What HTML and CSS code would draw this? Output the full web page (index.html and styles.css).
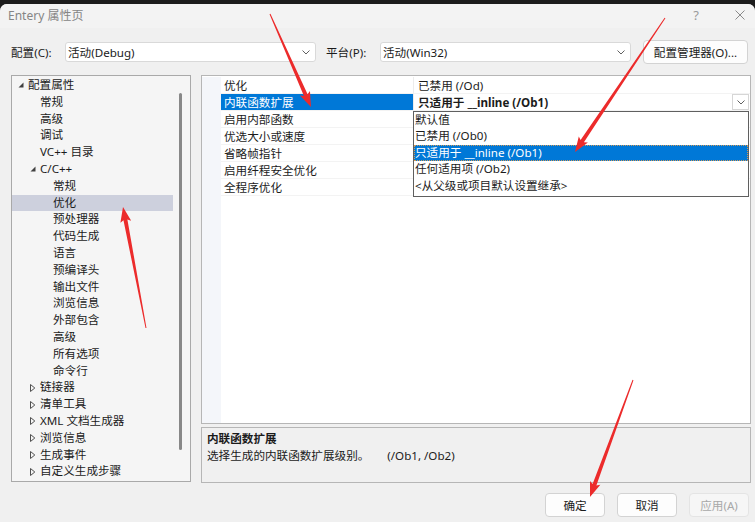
FILE: index.html
```html
<!DOCTYPE html>
<html>
  <head>
    <meta charset="utf-8">
    <title>Entery 属性页</title>
    <link rel="stylesheet" href="styles.css">
  </head>
  <body>
    <div class="window">
      <div class="titlebar">
        <span class="title">Entery 属性页</span>
        <span class="title-help">?</span>
        <svg class="title-close" width="10" height="10" viewBox="0 0 10 10"><path d="M0.5 0.5 L9.5 9.5 M9.5 0.5 L0.5 9.5" stroke="#8a8a8a" stroke-width="1"/></svg>
      </div>

      <div class="config-row">
        <span class="field-label">配置(C):</span>
        <div class="combo">
          <span>活动(Debug)</span>
          <svg class="chev" width="8" height="5" viewBox="0 0 8 5"><polyline points="0.5,0.5 4,4 7.5,0.5" fill="none" stroke="#606060"/></svg>
        </div>
        <span class="field-label second">平台(P):</span>
        <div class="combo">
          <span>活动(Win32)</span>
          <svg class="chev" width="8" height="5" viewBox="0 0 8 5"><polyline points="0.5,0.5 4,4 7.5,0.5" fill="none" stroke="#606060"/></svg>
        </div>
        <button class="btn btn-mgr">配置管理器(O)...</button>
      </div>

      <div class="main">
        <div class="tree">
          <ul class="tree-list">
            <li class="lv0"><span class="twisty"><svg width="6" height="6" viewBox="0 0 6 6"><polygon points="5.5,0.5 5.5,5.5 0.5,5.5" fill="#404040"/></svg></span>配置属性</li>
            <li class="lv1">常规</li>
            <li class="lv1">高级</li>
            <li class="lv1">调试</li>
            <li class="lv1">VC++ 目录</li>
            <li class="lv1 has-twisty"><span class="twisty"><svg width="6" height="6" viewBox="0 0 6 6"><polygon points="5.5,0.5 5.5,5.5 0.5,5.5" fill="#404040"/></svg></span>C/C++</li>
            <li class="lv2">常规</li>
            <li class="lv2 selected">优化</li>
            <li class="lv2">预处理器</li>
            <li class="lv2">代码生成</li>
            <li class="lv2">语言</li>
            <li class="lv2">预编译头</li>
            <li class="lv2">输出文件</li>
            <li class="lv2">浏览信息</li>
            <li class="lv2">外部包含</li>
            <li class="lv2">高级</li>
            <li class="lv2">所有选项</li>
            <li class="lv2">命令行</li>
            <li class="lv1 has-twisty"><span class="twisty"><svg width="6" height="8" viewBox="0 0 6 8"><polygon points="0.5,0.5 4.8,4 0.5,7.5" fill="none" stroke="#505050"/></svg></span>链接器</li>
            <li class="lv1 has-twisty"><span class="twisty"><svg width="6" height="8" viewBox="0 0 6 8"><polygon points="0.5,0.5 4.8,4 0.5,7.5" fill="none" stroke="#505050"/></svg></span>清单工具</li>
            <li class="lv1 has-twisty"><span class="twisty"><svg width="6" height="8" viewBox="0 0 6 8"><polygon points="0.5,0.5 4.8,4 0.5,7.5" fill="none" stroke="#505050"/></svg></span>XML 文档生成器</li>
            <li class="lv1 has-twisty"><span class="twisty"><svg width="6" height="8" viewBox="0 0 6 8"><polygon points="0.5,0.5 4.8,4 0.5,7.5" fill="none" stroke="#505050"/></svg></span>浏览信息</li>
            <li class="lv1 has-twisty"><span class="twisty"><svg width="6" height="8" viewBox="0 0 6 8"><polygon points="0.5,0.5 4.8,4 0.5,7.5" fill="none" stroke="#505050"/></svg></span>生成事件</li>
            <li class="lv1 has-twisty"><span class="twisty"><svg width="6" height="8" viewBox="0 0 6 8"><polygon points="0.5,0.5 4.8,4 0.5,7.5" fill="none" stroke="#505050"/></svg></span>自定义生成步骤</li>
          </ul>
          <div class="vscroll"><div class="thumb"></div></div>
        </div>

        <div class="right">
          <div class="grid">
            <div class="grid-margin"></div>
            <div class="grid-rows">
              <div class="prow">
                <div class="pname">优化</div>
                <div class="pvalue">已禁用 (/Od)</div>
              </div>
              <div class="prow">
                <div class="pname sel">内联函数扩展</div>
                <div class="pvalue edit">
                  <span>只适用于 __inline (/Ob1)</span>
                  <span class="dropbtn"><svg width="8" height="5" viewBox="0 0 8 5"><polyline points="0.5,0.5 4,4 7.5,0.5" fill="none" stroke="#606060"/></svg></span>
                </div>
              </div>
              <div class="prow">
                <div class="pname">启用内部函数</div>
                <div class="pvalue"></div>
              </div>
              <div class="prow">
                <div class="pname">优选大小或速度</div>
                <div class="pvalue"></div>
              </div>
              <div class="prow">
                <div class="pname">省略帧指针</div>
                <div class="pvalue"></div>
              </div>
              <div class="prow">
                <div class="pname">启用纤程安全优化</div>
                <div class="pvalue"></div>
              </div>
              <div class="prow">
                <div class="pname">全程序优化</div>
                <div class="pvalue"></div>
              </div>
            </div>

            <ul class="dropdown">
              <li>默认值</li>
              <li>已禁用 (/Ob0)</li>
              <li class="hot">只适用于 __inline (/Ob1)</li>
              <li>任何适用项 (/Ob2)</li>
              <li>&lt;从父级或项目默认设置继承&gt;</li>
            </ul>
          </div>

          <div class="desc">
            <div class="desc-title">内联函数扩展</div>
            <div>选择生成的内联函数扩展级别。<span class="desc-switch">(/Ob1, /Ob2)</span></div>
          </div>
        </div>
      </div>

      <div class="footer">
        <button class="btn">确定</button>
        <button class="btn">取消</button>
        <button class="btn" disabled>应用(A)</button>
      </div>
    </div>

    <!-- annotation arrows drawn on top of the screenshot -->
    <svg class="arrows" width="755" height="522" viewBox="0 0 755 522">
      <polygon points="269.54,14.2 303.92,95.91 299.92,95.49 311,107 309.98,91.05 307.58,94.29 270.46,13.8"/>
      <polygon points="664.59,17.72 580.59,140.09 578.79,136.48 575,152 587.93,142.62 583.91,142.33 665.42,18.28"/>
      <polygon points="146.49,327.91 127.39,219.4 131.2,220.7 123,207 120.4,222.76 123.47,220.14 145.51,328.09"/>
      <polygon points="632.53,379.83 592.61,484.11 590.02,481.02 590,497 600.34,484.82 596.37,485.49 633.47,380.17"/>
    </svg>
  </body>
</html>
```

FILE: styles.css
```css
* {
  box-sizing: border-box;
}

body {
  margin: 0;
  background-color: #1c1c1c;
  font-family: "Noto Sans", "Noto Sans CJK SC", sans-serif;
  font-size: 11.6px;
  color: #1b1b1b;
}

.window {
  margin-top: 4px;
  height: 518px;
  background-color: #f0f0f0;
  border-radius: 7px 7px 0 0;
  overflow: hidden;
}

/* title bar */
.titlebar {
  display: flex;
  align-items: center;
  height: 24px;
  padding: 0 10px 2px 8px;
  background-color: #f3f3f3;
  color: #858585;
}

.title {
  font-size: 12px;
}

.title-help {
  margin-left: auto;
  margin-right: 36px;
  color: #9a9a9a;
  font-size: 13px;
}

/* configuration row */
.config-row {
  display: flex;
  align-items: center;
  height: 24px;
  margin-top: 12px;
  padding-left: 11px;
}

.field-label {
  width: 54px;
  white-space: nowrap;
}

.field-label.second {
  margin-left: 10px;
}

.combo {
  display: flex;
  align-items: center;
  justify-content: space-between;
  width: 251px;
  height: 20px;
  padding: 0 5px 0 2px;
  background-color: #fff;
  border: 1px solid #d9d9d9;
  border-radius: 3px;
}

.btn {
  width: 60px;
  height: 24px;
  padding: 0;
  font: inherit;
  color: #1b1b1b;
  background-color: #fdfdfd;
  border: 1px solid #d3d3d3;
  border-radius: 4px;
}

.btn:disabled {
  color: #a8a8a8;
  background-color: #f6f6f6;
  border-color: #e4e4e4;
}

.btn-mgr {
  width: 105px;
  margin-left: 12px;
}

/* main area */
.main {
  display: flex;
  gap: 10px;
  margin-top: 11px;
  padding-left: 11px;
}

.tree {
  display: flex;
  width: 180px;
  height: 407px;
  background-color: #f5f5f5;
  border: 1px solid #a9a9a9;
}

.tree-list {
  width: 161px;
  margin: 0;
  padding: 1px 0 0;
  list-style: none;
}

.tree-list li {
  display: flex;
  align-items: center;
  height: 16.8px;
  line-height: 16.8px;
  white-space: nowrap;
}

.twisty {
  display: flex;
  align-items: center;
  width: 10px;
}

.lv0 {
  padding-left: 6px;
}

.lv1 {
  padding-left: 28px;
}

.lv1.has-twisty {
  padding-left: 18px;
}

.lv2 {
  padding-left: 41px;
}

.tree-list li.selected {
  background-color: #cdd0dd;
}

.vscroll {
  width: 17px;
  padding: 17px 0 0 6px;
}

.thumb {
  width: 3px;
  height: 357px;
  background-color: #888;
  border-radius: 2px;
}

.right {
  display: flex;
  flex-direction: column;
  gap: 3px;
  width: 550px;
}

/* property grid */
.grid {
  position: relative;
  display: flex;
  height: 349px;
  padding-top: 1px;
  background-color: #fff;
  border: 1px solid #b6b6b6;
}

.grid-margin {
  width: 19px;
  background-color: #f4f6fa;
}

.grid-rows {
  flex: 1;
}

.prow {
  display: flex;
  height: 17px;
  line-height: 17px;
}

.pname {
  width: 192px;
  padding-left: 3px;
  border-bottom: 1px solid #f3f3f3;
  white-space: nowrap;
}

.pname.sel {
  background-color: #0078d7;
  color: #fff;
}

.pvalue {
  flex: 1;
  padding-left: 4px;
  border-left: 1px solid #ececec;
  border-bottom: 1px solid #f3f3f3;
  white-space: nowrap;
}

.pvalue.edit {
  display: flex;
  align-items: center;
  justify-content: space-between;
  padding-right: 1px;
  font-weight: bold;
}

.dropbtn {
  display: flex;
  align-items: center;
  justify-content: center;
  width: 17px;
  height: 16px;
  background-color: #fff;
  border: 1px solid #d6d6d6;
}

.dropdown {
  position: absolute;
  top: 35px;
  left: 211px;
  width: 336px;
  height: 86px;
  margin: 0;
  padding: 0;
  list-style: none;
  background-color: #fff;
  border: 1px solid #5f5f5f;
}

.dropdown li {
  height: 16.4px;
  line-height: 16.4px;
  padding-left: 1px;
  white-space: nowrap;
}

.dropdown li.hot {
  background-color: #0078d7;
  color: #fff;
  outline: 1px dotted #d39a58;
  outline-offset: -1px;
}

/* description */
.desc {
  height: 56px;
  padding: 2px 5px;
  line-height: 17px;
  background-color: #f0f0f0;
  border: 1px solid #b6b6b6;
}

.desc-title {
  font-weight: bold;
}

.desc-switch {
  margin-left: 18px;
}

/* buttons */
.footer {
  display: flex;
  justify-content: flex-end;
  gap: 12px;
  margin-top: 10px;
  padding-right: 6px;
}

.arrows {
  position: absolute;
  top: 0;
  left: 0;
  pointer-events: none;
}

.arrows polygon {
  fill: #ec2b2b;
}
```
